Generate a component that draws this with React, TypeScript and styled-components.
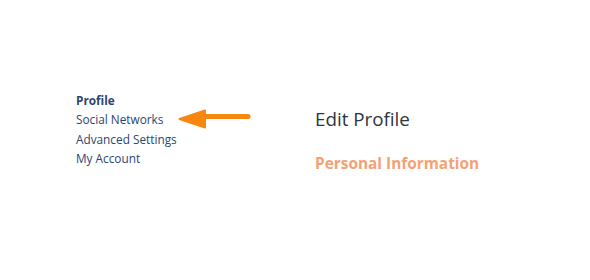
import React from "react";
import styled, { createGlobalStyle } from "styled-components";

const Global = createGlobalStyle`
  html, body { margin: 0; padding: 0; background: #ffffff; }
  body { font-family: "Open Sans", "Lato", sans-serif; }
`;

const Page = styled.div`
  width: 590px;
  height: 280px;
  display: flex;
  padding: 90px 0 0 76px;
  box-sizing: border-box;
`;

const Sidebar = styled.nav`
  width: 239px;
  display: flex;
  flex-direction: column;
  flex-shrink: 0;
`;

const NavItem = styled.div<{ $active?: boolean }>`
  display: flex;
  align-items: center;
  height: 19.5px;
  font-size: 11.8px;
  color: #2e4470;
  font-weight: ${(p) => (p.$active ? 700 : 400)};
  white-space: nowrap;
`;

const ArrowWrap = styled.span`
  display: inline-flex;
  margin-left: 15px;
`;

const Main = styled.main`
  display: flex;
  flex-direction: column;
  padding-top: 18px;
`;

const Title = styled.h1`
  margin: 0;
  font-size: 18.8px;
  font-weight: 400;
  color: #2f3440;
  line-height: 22px;
`;

const Section = styled.h2`
  margin: 24px 0 0;
  font-size: 15.4px;
  font-weight: 700;
  color: #f5a273;
  line-height: 20px;
`;

const Arrow = () => (
  <svg width="74" height="20" viewBox="0 0 74 20">
    <path d="M26 7.5 H70" stroke="#f7870f" strokeWidth="5" strokeLinecap="round" />
    <path d="M1.5 10 L27 1.5 L27 18.5 Z" fill="#f7870f" stroke="#f7870f" strokeWidth="2" strokeLinejoin="round" />
  </svg>
);

export default function App() {
  return (
    <>
      <Global />
      <Page>
        <Sidebar>
          <NavItem $active>Profile</NavItem>
          <NavItem>
            Social Networks
            <ArrowWrap>
              <Arrow />
            </ArrowWrap>
          </NavItem>
          <NavItem>Advanced Settings</NavItem>
          <NavItem>My Account</NavItem>
        </Sidebar>
        <Main>
          <Title>Edit Profile</Title>
          <Section>Personal Information</Section>
        </Main>
      </Page>
    </>
  );
}
